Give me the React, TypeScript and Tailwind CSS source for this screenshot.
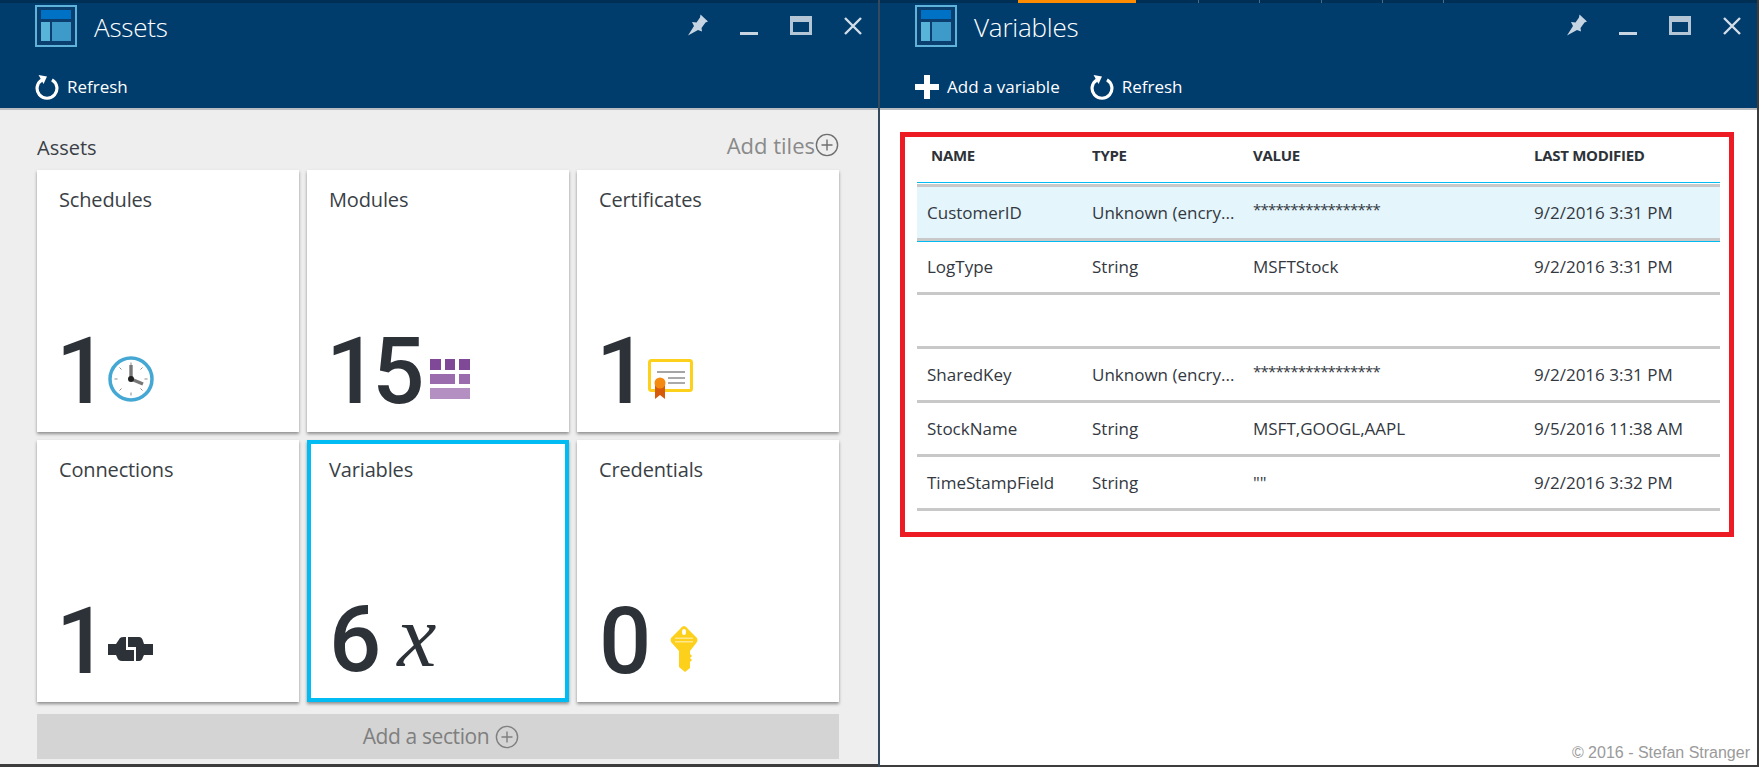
import type { ReactNode } from 'react';

const font = '[font-family:"Open_Sans","Noto_Sans",sans-serif]';

function BladeIcon() {
  return (
    <svg width="42" height="42" viewBox="0 0 42 42" className="shrink-0">
      <rect x="0" y="0" width="42" height="42" fill="#5fb3da" />
      <rect x="2" y="2" width="38" height="38" fill="#0b3f6f" />
      <rect x="6" y="5" width="30" height="9" fill="#0072c6" />
      <rect x="6" y="17" width="9" height="19" fill="#59b4d9" />
      <rect x="17" y="17" width="19" height="19" fill="#3e9ac9" />
    </svg>
  );
}

function RefreshIcon() {
  return (
    <svg width="24" height="25" viewBox="0 0 24 25.200" className="shrink-0">
      <path d="M7 4.800A10 10 0 1 0 17 4.800" fill="none" stroke="#fff" strokeWidth="3.200" />
      <path d="M3.500 0 L12 1.500 L8.500 9 Z" fill="#fff" />
    </svg>
  );
}

function PlusIcon() {
  return (
    <svg width="24" height="24" viewBox="0 0 24 24" className="shrink-0">
      <path d="M9 0h6v9h9v6h-9v9H9v-9H0V9h9z" fill="#fff" />
    </svg>
  );
}

function CircledPlus({ color }: { color: string }) {
  return (
    <svg width="24" height="24" viewBox="0 0 24 24" className="shrink-0">
      <circle cx="12" cy="12" r="10.600" fill="none" stroke={color} strokeWidth="1.400" />
      <path d="M12 6.500v11M6.500 12h11" fill="none" stroke={color} strokeWidth="1.400" />
    </svg>
  );
}

function WindowControls() {
  return (
    <div className="flex items-start">
      <svg width="22" height="22" viewBox="0 0 22 22" className="mt-[14px]">
        <path d="M13.500 0.500 L21 7.500 L18.500 8.500 L14.500 14 L15 17.500 L11 16 L1 21.500 L7 12 L5 8 L9.500 8.500 L13 3.500 Z" fill="#c7d5e2" />
      </svg>
      <div className="ml-[31px] mt-[32px] h-[3px] w-[18px] bg-[#c7d5e2]" />
      <div className="ml-[32px] mt-[16px] h-[19px] w-[22px] border-[3px] border-t-[6px] border-[#b4c6d6]" />
      <svg width="18" height="18" viewBox="0 0 18 18" className="ml-[32px] mt-[17px]">
        <path d="M1 1L17 17M17 1L1 17" stroke="#d3dee8" strokeWidth="2.400" />
      </svg>
    </div>
  );
}

function BladeHeader({ title, children }: { title: string; children: ReactNode }) {
  return (
    <div className="h-[110px] shrink-0 border-b-2 border-[#b9bdc1] bg-[#003c6c]">
      <div className="h-[3px] bg-[#002f56]" />
      <div className="flex h-[63px] items-start justify-between pl-[35px] pr-[16px]">
        <div className="flex items-start pt-[2px]">
          <BladeIcon />
          <div className="ml-[17px] pt-[1px] text-[26px] leading-[42px] font-light tracking-[-0.2px] text-white">{title}</div>
        </div>
        <div className="-mt-[3px]">
          <WindowControls />
        </div>
      </div>
      <div className="flex h-[42px] items-center pl-[35px] text-[17px] text-white">{children}</div>
    </div>
  );
}

function ClockIcon() {
  return (
    <svg width="46" height="46" viewBox="0 0 46 46">
      <circle cx="23" cy="23" r="21" fill="#fff" stroke="#45a8d4" strokeWidth="3.500" />
      <path d="M23 6.500v3M23 36.500v3M6.500 23h3M36.500 23h3M11.500 11.500l2 2M34.500 11.500l-2 2M11.500 34.500l2-2M34.500 34.500l-2-2" stroke="#8a8a8a" strokeWidth="1" />
      <path d="M23 23V9" stroke="#777" strokeWidth="3.400" />
      <path d="M23 23l12 5" stroke="#777" strokeWidth="3.400" />
      <circle cx="23" cy="23" r="3" fill="#222" />
    </svg>
  );
}

function ModulesIcon() {
  return (
    <div className="ml-[5px] flex w-[40px] flex-col gap-[4px]">
      <div className="flex h-[11px] gap-[4px]">
        <div className="w-[11px] bg-[#804998]" />
        <div className="w-[10px] bg-[#804998]" />
        <div className="w-[11px] bg-[#804998]" />
      </div>
      <div className="flex h-[10px] gap-[4px]">
        <div className="w-[25px] bg-[#9b6cad]" />
        <div className="w-[11px] bg-[#9b6cad]" />
      </div>
      <div className="h-[11px] bg-[#b48fc1]" />
    </div>
  );
}

function CertIcon() {
  return (
    <svg width="46" height="40" viewBox="0 0 46 40">
      <rect x="1.500" y="1.500" width="42" height="30" rx="2" fill="#fff" stroke="#fdd01c" strokeWidth="3" />
      <path d="M9 13h28" stroke="#8f8f8f" strokeWidth="1.600" />
      <path d="M20 19h17M20 24h17" stroke="#8f8f8f" strokeWidth="1.600" />
      <path d="M7 26h10v14l-5-4-5 4z" fill="#d75a0b" />
      <circle cx="12" cy="24" r="5.500" fill="#f58a10" />
    </svg>
  );
}

function ConnectionIcon() {
  return (
    <svg width="45" height="24" viewBox="0 0 45 24">
      <path d="M0 7H8L12 1Q13 0 16 0H18V13H26V24H14Q10 24 9 20L8 18H0Z" fill="#2d3239" />
      <path d="M20 0H31Q34 0 35 4L36 7H45V18H36L35 20Q34 24 31 24H28V10H20Z" fill="#2d3239" />
    </svg>
  );
}

function KeyIcon() {
  return (
    <svg width="28" height="46" viewBox="0 0 28 46" className="ml-[19px]">
      <path d="M14 0Q16 0 18 3L27 12Q28 14 27 16L20 25V28L22 30L20 32L22 34L20 36V42L15 46L9 41V25L1 16Q0 14 1 12L10 3Q12 0 14 0Z" fill="#fdd01c" />
      <path d="M5 11.500h18v1.600H5zM5 15h18v1.600H5z" fill="#ffe68a" />
      <ellipse cx="14" cy="6" rx="2" ry="3" fill="#fff" />
    </svg>
  );
}

function Tile({ label, count, icon, selected }: { label: string; count: string; icon: ReactNode; selected?: boolean }) {
  return (
    <div
      className={
        selected
          ? 'flex h-[262px] flex-col justify-between border-[4px] border-[#00bcf2] bg-white pt-[11px] pl-[18px] shadow-[0_2px_3px_rgba(0,0,0,0.4)]'
          : 'flex h-[262px] flex-col justify-between bg-white pt-[15px] pl-[22px] shadow-[0_2px_3px_rgba(0,0,0,0.4)]'
      }
    >
      <div className="text-[20px] leading-[30px] tracking-[-0.15px] text-[#3a3f46]">{label}</div>
      <div className={selected ? 'flex h-[116px] items-center gap-[6px]' : 'flex h-[120px] items-center gap-[6px]'}>
        <div
          className={
            count === '0' || count === '6'
              ? "font-['Roboto'] text-[92px] leading-none font-medium tracking-[-6px] text-[#2d3239]"
              : "-ml-[3px] font-['Roboto'] text-[92px] leading-none font-medium tracking-[-6px] text-[#2d3239]"
          }
        >
          {count}
        </div>
        <div className="mt-[14px]">{icon}</div>
      </div>
    </div>
  );
}

const rows = [
  { name: 'CustomerID', type: 'Unknown (encry...', value: '*****************', modified: '9/2/2016 3:31 PM', selected: true },
  { name: 'LogType', type: 'String', value: 'MSFTStock', modified: '9/2/2016 3:31 PM' },
  { name: '', type: '', value: '', modified: '' },
  { name: 'SharedKey', type: 'Unknown (encry...', value: '*****************', modified: '9/2/2016 3:31 PM' },
  { name: 'StockName', type: 'String', value: 'MSFT,GOOGL,AAPL', modified: '9/5/2016 11:38 AM' },
  { name: 'TimeStampField', type: 'String', value: '""', modified: '9/2/2016 3:32 PM' },
];

function VariablesTable() {
  return (
    <div className="mt-[22px] ml-[20px] mr-[23px] h-[405px] border-[5px] border-[#ed1c24] pr-[9px] pl-[12px]">
      <div className="grid h-[46px] grid-cols-[161px_161px_281px_1fr] items-start border-b border-[#00bcf2] pt-[8px] pl-[14px] text-[15px] leading-[20px] font-bold tracking-[-0.3px] text-[#2d3239]">
        <div>NAME</div>
        <div>TYPE</div>
        <div>VALUE</div>
        <div>LAST MODIFIED</div>
      </div>
      <div className="mt-[1px] h-[3px] bg-[#c8c8c8]" />
      {rows.map((row) => (
        <div
          key={row.name || 'blank'}
          className={
            row.selected
              ? 'relative grid h-[54px] grid-cols-[165px_161px_281px_1fr] items-center border-b-[3px] border-[#c8c8c8] bg-[#e4f5fc] pl-[10px] text-[17px] text-[#33383f] shadow-[0_1px_0_#00bcf2]'
              : 'grid h-[54px] grid-cols-[165px_161px_281px_1fr] items-center border-b-[3px] border-[#c8c8c8] pl-[10px] text-[17px] text-[#33383f]'
          }
        >
          <div>{row.name}</div>
          <div className="truncate">{row.type}</div>
          <div className={row.value.startsWith('*') ? 'pb-[6px] text-[15px] tracking-[-0.8px]' : ''}>{row.value}</div>
          <div>{row.modified}</div>
        </div>
      ))}
    </div>
  );
}

export default function App() {
  return (
    <div className={`flex h-[768px] w-[1761px] overflow-hidden bg-white ${font}`}>
      <div className="flex h-[767px] w-[880px] shrink-0 flex-col border-r-2 border-[#34495e]">
        <BladeHeader title="Assets">
          <RefreshIcon />
          <span className="ml-[8px]">Refresh</span>
        </BladeHeader>
        <div className="flex-1 border-b-[3px] border-[#3c3c3c] bg-[#eeeeee] pr-[39px] pl-[37px]">
          <div className="flex h-[60px] items-center justify-between pt-[16px]">
            <div className="text-[20px] text-[#3a3f46]">Assets</div>
            <div className="-mt-[6px] flex items-center text-[22px] text-[#8a8a8a]">
              Add tiles <CircledPlus color="#6f6f6f" />
            </div>
          </div>
          <div className="grid grid-cols-3 gap-[8px]">
            <Tile label="Schedules" count="1" icon={<ClockIcon />} />
            <Tile label="Modules" count="15" icon={<ModulesIcon />} />
            <Tile label="Certificates" count="1" icon={<CertIcon />} />
            <Tile label="Connections" count="1" icon={<ConnectionIcon />} />
            <Tile label="Variables" count="6" selected icon={<span className="ml-[16px] block -translate-y-[10px] font-['Liberation_Serif'] text-[88px] leading-none text-[#2d3239] italic">x</span>} />
            <Tile label="Credentials" count="0" icon={<KeyIcon />} />
          </div>
          <div className="mt-[12px] flex h-[45px] items-center justify-center gap-[6px] bg-[#d4d4d4] pl-[6px] text-[21px] tracking-[-0.4px] text-[#7f7f7f]">
            Add a section <CircledPlus color="#7f7f7f" />
          </div>
        </div>
      </div>
      <div className="relative flex h-[767px] w-[879px] shrink-0 flex-col border-r-2 border-b-[2px] border-[#3c3c3c]">
        <div className="absolute top-0 left-[138px] h-[3px] w-[118px] bg-[#ff8c00]" />
        <div className="absolute top-0 left-[318px] h-[3px] w-px bg-[#4a6d8c]" />
        <div className="absolute top-0 left-[379px] h-[3px] w-px bg-[#4a6d8c]" />
        <div className="absolute top-0 left-[441px] h-[3px] w-px bg-[#4a6d8c]" />
        <div className="absolute top-0 left-[502px] h-[3px] w-px bg-[#4a6d8c]" />
        <div className="absolute top-0 left-[563px] h-[3px] w-px bg-[#4a6d8c]" />
        <BladeHeader title="Variables">
          <PlusIcon />
          <span className="ml-[8px]">Add a variable</span>
          <span className="ml-[30px]"><RefreshIcon /></span>
          <span className="ml-[8px]">Refresh</span>
        </BladeHeader>
        <VariablesTable />
        <div className="absolute right-[7px] bottom-0 font-['Liberation_Sans'] text-[16px] text-[#9a9a9a]">© 2016 - Stefan Stranger</div>
      </div>
    </div>
  );
}
